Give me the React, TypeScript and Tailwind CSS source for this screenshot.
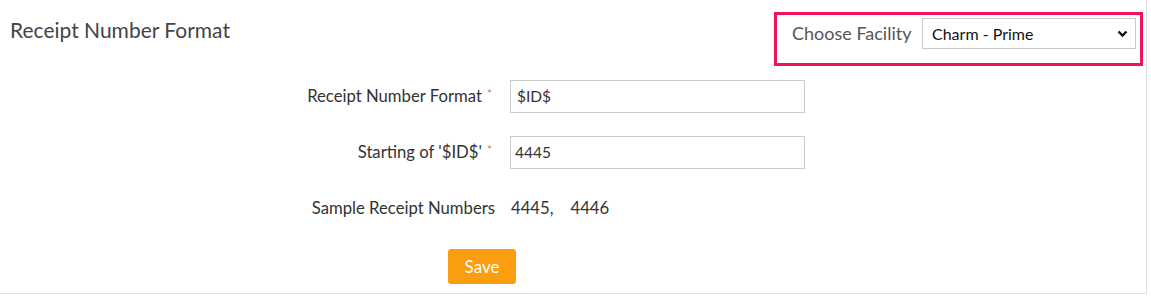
import React from "react";

function Row({ label, required, children }: { label: string; required?: boolean; children: React.ReactNode }) {
  return (
    <div className="flex h-[33px] items-center">
      <div className="w-[495px] shrink-0 pr-[3px] text-right text-[16.7px] text-[#333]">
        {label}
        {required ? <span className="relative top-[3px] ml-[5px] align-top text-[12px] leading-[14px] text-[#ec6a6a]">*</span> : null}
      </div>
      <div className="ml-[15px]">{children}</div>
    </div>
  );
}

export default function App() {
  return (
    <div className="h-[294px] w-[1147px] border-b border-r border-[#e0e0e0] bg-white" style={{ fontFamily: "Lato, 'Noto Sans', sans-serif" }}>
      <div className="flex items-start">
        <div className="pl-[10px] pt-[18px] text-[21px] leading-[24px] text-[#444]">Receipt Number Format</div>
        <div className="ml-auto mr-[3px] mt-[12px] flex h-[54px] w-[369px] items-start border-[3px] border-[#f0135b] pl-[15px] pt-[3px]">
          <div className="mt-[3px] w-[119px] shrink-0 whitespace-nowrap text-[18px] leading-[24px] text-[#555]">Choose Facility</div>
          <div className="relative ml-[11px] h-[31px] w-[214px] border border-[#c8c8c8] bg-white">
            <div className="pl-[9px] pt-[4px] text-[16px] leading-[22px] text-[#111]">Charm - Prime</div>
            <svg className="absolute right-[7px] top-[11px]" width="11" height="8" viewBox="0 0 11 8">
              <path d="M1.5 1.5 L5.5 5.5 L9.5 1.5" fill="none" stroke="#111" strokeWidth="2.4" />
            </svg>
          </div>
        </div>
      </div>
      <div className="mt-[14px]">
        <Row label="Receipt Number Format" required>
          <div className="h-[33px] w-[295px] border border-[#ccc] pl-[6px] text-[15.5px] leading-[31px] text-[#333]">$ID$</div>
        </Row>
        <div className="mt-[23px]">
          <Row label="Starting of '$ID$'" required>
            <div className="h-[33px] w-[295px] border border-[#ccc] pl-[4px] text-[15.5px] leading-[31px] text-[#333]">4445</div>
          </Row>
        </div>
        <div className="mt-[23px]">
          <div className="flex h-[33px] items-center">
            <div className="w-[495px] shrink-0 text-right text-[16.7px] text-[#333]">Sample Receipt Numbers</div>
            <div className="ml-[16px] text-[16.7px] text-[#333]">
              4445,<span className="ml-[17px]">4446</span>
            </div>
          </div>
        </div>
        <div className="mt-[24px] pl-[448px]">
          <button className="h-[35px] w-[68px] rounded-[3px] bg-[#fa9e0f] text-[17px] text-white">Save</button>
        </div>
      </div>
    </div>
  );
}
